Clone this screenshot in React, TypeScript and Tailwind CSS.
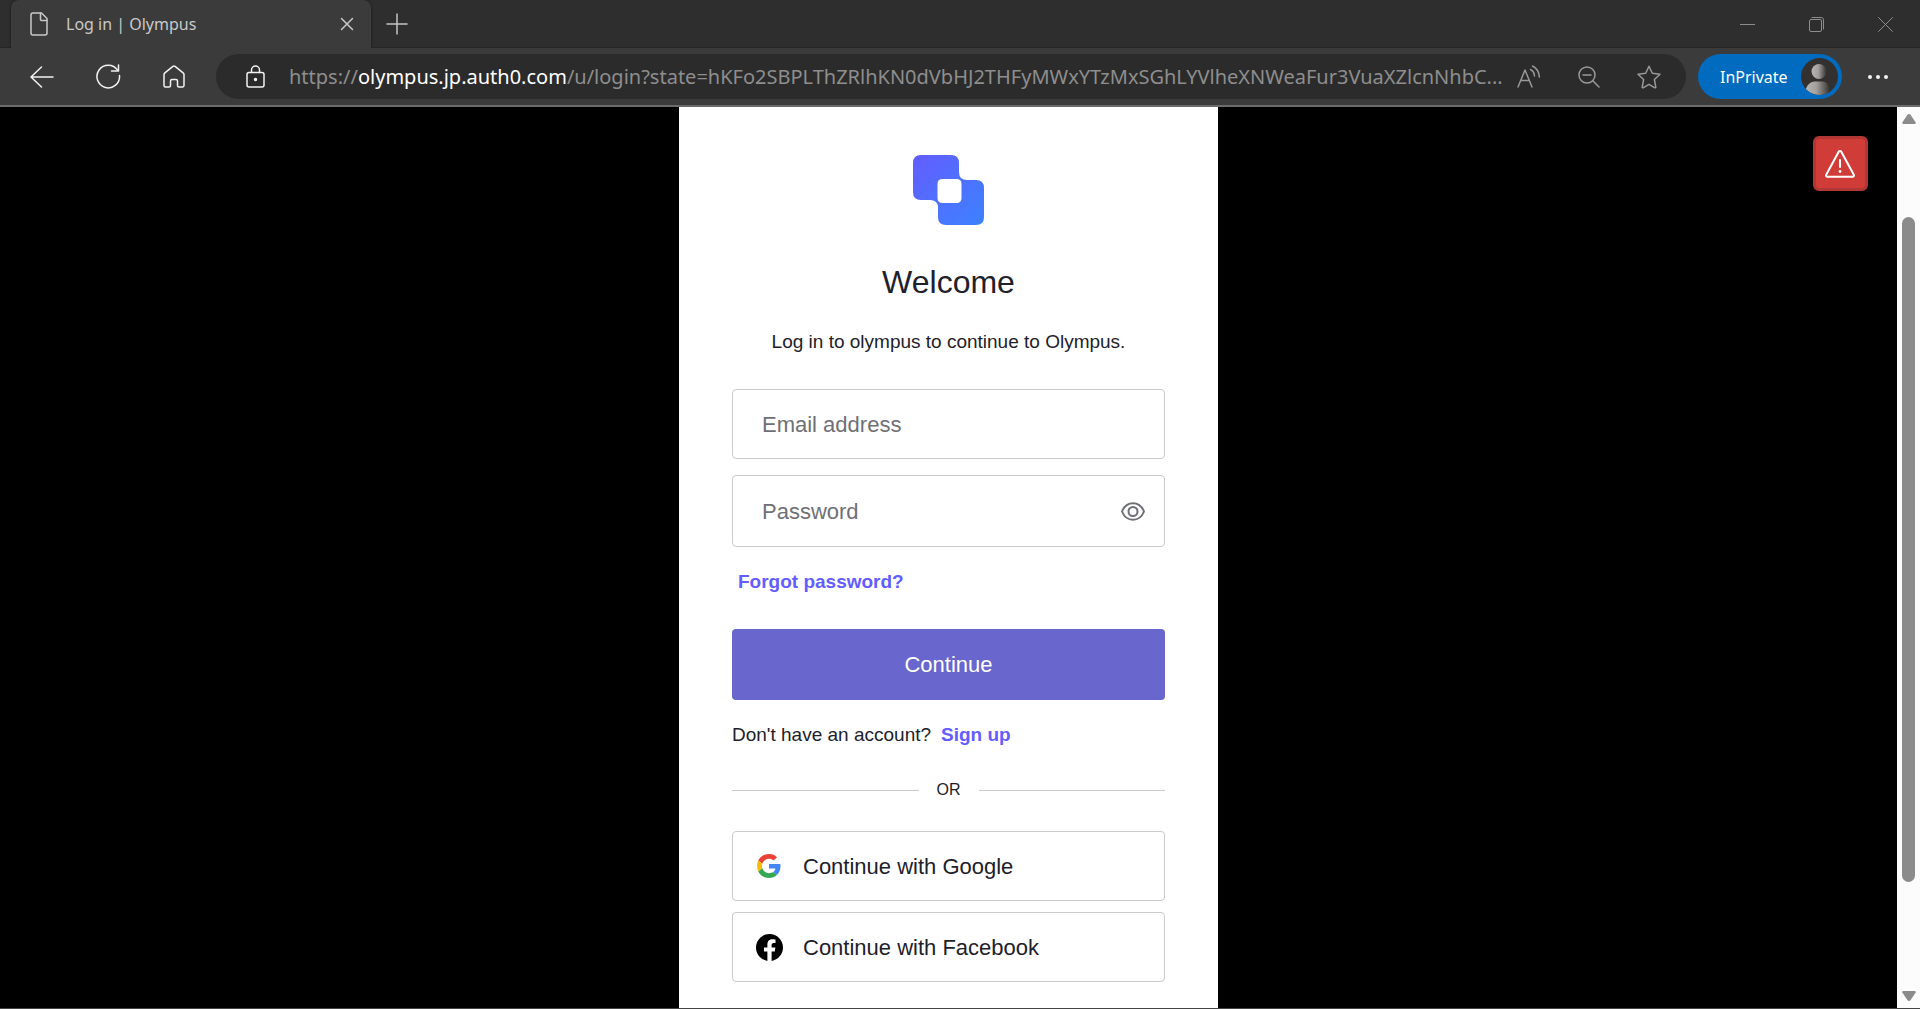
import React from "react";

const iconButton = "flex h-12 w-12 shrink-0 items-center justify-center";

function Icon({ w, h, stroke = 2, children }: { w: number; h: number; stroke?: number; children: React.ReactNode }) {
  return (
    <svg
      width={w}
      height={h}
      viewBox={`0 0 ${w} ${h}`}
      fill="none"
      stroke="currentColor"
      strokeWidth={stroke}
      strokeLinecap="round"
      strokeLinejoin="round"
      className="shrink-0"
      aria-hidden="true"
    >
      {children}
    </svg>
  );
}

function TabStrip() {
  return (
    <div className="flex h-12 shrink-0 items-stretch bg-[#2e2e2e] pl-[11px] shadow-[inset_0_-1px_0_#262626]">
      <div className="flex w-[360px] items-center rounded-t-lg bg-[#3b3b3b] pr-3 pl-[19px] text-[#c9c9c9] shadow-[0_0_3px_#1c1c1c]">
        <Icon w={18} h={24} stroke={1.5}>
          <path d="M3 1h8.500l5.500 5.500V21a2 2 0 0 1-2 2H3a2 2 0 0 1-2-2V3a2 2 0 0 1 2-2z" />
          <path d="M10.500 1v6.500a1 1 0 0 0 1 1H17" />
        </Icon>
        <span className="ml-[18px] flex-1 text-base">Log in | Olympus</span>
        <button type="button" aria-label="Close tab" className="flex h-6 w-6 items-center justify-center">
          <Icon w={14} h={14} stroke={1.5}>
            <path d="M1.500 1.500l11 11M12.500 1.500l-11 11" />
          </Icon>
        </button>
      </div>
      <button type="button" aria-label="New tab" className="flex w-[52px] items-center justify-center text-[#c4c4c4]">
        <Icon w={22} h={22} stroke={1.5}>
          <path d="M11 1v20M1 11h20" />
        </Icon>
      </button>
      <div className="ml-auto flex text-[#8d8d8d]">
        <button type="button" aria-label="Minimize" className="flex w-[69px] items-center justify-center">
          <Icon w={15} h={15} stroke={1}>
            <path d="M0 7.500h15" />
          </Icon>
        </button>
        <button type="button" aria-label="Restore" className="flex w-[69px] items-center justify-center">
          <Icon w={15} h={15} stroke={1}>
            <rect x="0.500" y="2.500" width="12" height="12" rx="1.500" />
            <path d="M3 .5h9a2.500 2.500 0 0 1 2.500 2.500v9" />
          </Icon>
        </button>
        <button type="button" aria-label="Close" className="flex w-[69px] items-center justify-center">
          <Icon w={15} h={15} stroke={1}>
            <path d="M.5.5l14 14M14.500.5l-14 14" />
          </Icon>
        </button>
      </div>
    </div>
  );
}

function Toolbar() {
  return (
    <div className="flex h-[59px] shrink-0 items-center border-b-2 border-[#6b6b6b] bg-[#3b3b3b] px-[18px] text-[#f2f2f2]">
      <div className="flex gap-[18px]">
        <button type="button" aria-label="Back" className={iconButton}>
          <Icon w={24} h={22} stroke={1.5}>
            <path d="M11.500 1L1 11l10.500 10M1.500 11H23" />
          </Icon>
        </button>
        <button type="button" aria-label="Refresh" className={iconButton}>
          <Icon w={25} h={25} stroke={1.5}>
            <path d="M23.500 11.500A11.300 11.300 0 1 1 21.600 6.200" />
            <path d="M22.500 1v6h-7" />
          </Icon>
        </button>
        <button type="button" aria-label="Home" className={iconButton}>
          <Icon w={22} h={23} stroke={1.500}>
            <path d="M1 9.800c0-.8.300-1.400.9-1.900l8-6.500a1.700 1.700 0 0 1 2.200 0l8 6.500c.6.500.9 1.100.9 1.900V20.500A1.500 1.500 0 0 1 19.500 22H16a1.500 1.500 0 0 1-1.500-1.500V16A1.500 1.500 0 0 0 13 14.500H9A1.500 1.500 0 0 0 7.500 16v4.500A1.500 1.500 0 0 1 6 22H2.500A1.500 1.500 0 0 1 1 20.500z" />
          </Icon>
        </button>
      </div>

      <div className="mr-3 ml-[18px] flex h-[45px] min-w-0 flex-1 items-center rounded-full bg-[#2b2b2b] pr-[13px] pl-[15px]">
        <button type="button" aria-label="Site information" className={iconButton}>
          <Icon w={19} h={23} stroke={1.500}>
            <rect x="1" y="7.500" width="17" height="14.500" rx="2" />
            <path d="M5.500 7.500V5a4 4 0 0 1 8 0v2.500" />
            <circle cx="9.500" cy="14.500" r="1" fill="currentColor" />
          </Icon>
        </button>
        <div
          role="textbox"
          aria-label="Address"
          contentEditable
          suppressContentEditableWarning
          spellCheck={false}
          className="ml-[10px] min-w-0 flex-1 overflow-hidden text-[20px] leading-8 whitespace-nowrap text-[#8e8e8e]"
        >
          https://<span className="text-white">olympus.jp.auth0.com</span>
          /u/login?state=hKFo2SBPLThZRlhKN0dVbHJ2THFyMWxYTzMxSGhLYVlheXNWeaFur3VuaXZlcnNhbC...
        </div>
        <div className="flex gap-3 text-[#999]">
          <button type="button" aria-label="Read aloud" className={iconButton}>
            <Icon w={24} h={24} stroke={1.500}>
              <path d="M1 22L8 5l7 17M3.800 15.500h8.600" />
              <path d="M13.500 4.500c2.300 1.200 3.800 3.500 4 6.500M15.500 1c4 2 6.500 6 6.900 11" />
            </Icon>
          </button>
          <button type="button" aria-label="Zoom" className={iconButton}>
            <Icon w={22} h={22} stroke={1.500}>
              <circle cx="9" cy="9" r="8" />
              <path d="M5 9h8M14.800 14.800L21 21" />
            </Icon>
          </button>
          <button type="button" aria-label="Add to favorites" className={iconButton}>
            <Icon w={24} h={24} stroke={1.500}>
              <path d="M12 1.200l3.300 7 7.700 1-5.600 5.300 1.400 7.600c.1.600-.4.900-.9.700L12 19.400l-5.900 3.400c-.5.200-1-.1-.9-.7l1.400-7.600L1 9.200l7.700-1z" />
            </Icon>
          </button>
        </div>
      </div>

      <button type="button" className="flex h-[45px] w-36 shrink-0 items-center justify-between rounded-full bg-[#006bbf] pr-1 pl-[22px] text-base text-white">
        InPrivate
        <svg width="37" height="37" viewBox="0 0 37 37" aria-hidden="true">
          <defs>
            <linearGradient id="person" x1="0" x2="1">
              <stop offset="0" stopColor="#b9b6b2" />
              <stop offset="0.450" stopColor="#a3a09d" />
              <stop offset="1" stopColor="#34322f" />
            </linearGradient>
            <clipPath id="round">
              <circle cx="18.500" cy="18.500" r="18.500" />
            </clipPath>
          </defs>
          <g clipPath="url(#round)">
            <rect width="37" height="37" fill="#33312f" />
            <circle cx="18" cy="13.500" r="7.500" fill="url(#person)" />
            <path d="M4 37c0-8 4-13.500 10-13.500h7c5 0 8 4 8 13.500z" fill="url(#person)" />
          </g>
        </svg>
      </button>
      <button type="button" aria-label="Settings and more" className={iconButton + " ml-3"}>
        <svg width="20" height="4" viewBox="0 0 20 4" fill="currentColor" aria-hidden="true">
          <circle cx="2" cy="2" r="2" />
          <circle cx="10" cy="2" r="2" />
          <circle cx="18" cy="2" r="2" />
        </svg>
      </button>
    </div>
  );
}

function Logo() {
  return (
    <svg width="71" height="70" viewBox="0 0 71 70" role="img" aria-label="Olympus" className="mx-auto">
      <defs>
        <linearGradient id="mark" x1="0" y1="0" x2="1" y2="1">
          <stop offset="0" stopColor="#635dff" />
          <stop offset="1" stopColor="#3c82ff" />
        </linearGradient>
      </defs>
      <path
        fill="url(#mark)"
        fillRule="evenodd"
        d="M8 0H38Q46 0 46 8V17Q46 25 54 25H63Q71 25 71 33V62Q71 70 63 70H33Q25 70 25 62V53Q25 45 17 45H8Q0 45 0 37V8Q0 0 8 0ZM29.500 24Q24.500 24 24.500 29V43Q24.500 48 29.500 48H43.500Q48.500 48 48.500 43V29Q48.500 24 43.500 24Z"
      />
    </svg>
  );
}

function GoogleMark() {
  return (
    <svg width="24" height="24" viewBox="0 0 48 48" aria-hidden="true">
      <path fill="#EA4335" d="M24 9.500c3.540 0 6.710 1.220 9.210 3.600l6.850-6.850C35.900 2.380 30.470 0 24 0 14.620 0 6.510 5.380 2.560 13.220l7.980 6.190C12.430 13.720 17.740 9.500 24 9.500z" />
      <path fill="#4285F4" d="M46.980 24.550c0-1.570-.15-3.090-.38-4.550H24v9.020h12.940c-.58 2.960-2.260 5.480-4.780 7.180l7.730 6c4.510-4.180 7.090-10.360 7.090-17.650z" />
      <path fill="#FBBC05" d="M10.530 28.590c-.48-1.450-.76-2.990-.76-4.590s.27-3.140.76-4.590l-7.980-6.190C.92 16.460 0 20.120 0 24c0 3.880.92 7.540 2.560 10.780l7.970-6.190z" />
      <path fill="#34A853" d="M24 48c6.480 0 11.930-2.130 15.890-5.810l-7.730-6c-2.150 1.450-4.920 2.300-8.160 2.300-6.260 0-11.570-4.220-13.470-9.910l-7.980 6.190C6.510 42.620 14.620 48 24 48z" />
    </svg>
  );
}

function FacebookMark() {
  return (
    <svg width="27" height="27" viewBox="0 0 24 24" aria-hidden="true">
      <path fill="#000" d="M24 12.073c0-6.627-5.373-12-12-12s-12 5.373-12 12c0 5.990 4.388 10.954 10.125 11.854v-8.385H7.078v-3.470h3.047V9.430c0-3.007 1.792-4.669 4.533-4.669 1.312 0 2.686.235 2.686.235v2.953H15.830c-1.491 0-1.956.925-1.956 1.874v2.250h3.328l-.532 3.470h-2.796v8.385C19.612 23.027 24 18.062 24 12.073z" />
    </svg>
  );
}

function SocialButton({ mark, label }: { mark: React.ReactNode; label: string }) {
  return (
    <button type="button" className="flex h-[70px] w-full items-center gap-5 rounded border border-[#c9cace] pl-[22px] text-[22px]">
      <span className="flex w-7 items-center justify-center">{mark}</span>
      {label}
    </button>
  );
}

const field = "peer block w-full rounded border border-[#c9cace] bg-white pl-[29px] text-[22px] outline-none focus:border-[#635dff]";
const fieldLabel =
  "pointer-events-none absolute inset-y-0 left-[30px] flex items-center text-[22px] text-[#6f7076] peer-[:not(:placeholder-shown)]:hidden";

function LoginCard() {
  return (
    <main className="w-full max-w-[539px] bg-white px-[53px] pt-12 pb-[26px] font-['Liberation_Sans',Arial,sans-serif] text-[#1e212a]">
      <Logo />
      <h1 className="mt-[37px] text-center text-[32px] leading-10">Welcome</h1>
      <p className="mt-[26px] text-center text-[19px] leading-7">Log in to olympus to continue to Olympus.</p>
      <form className="mt-[33px]" onSubmit={(e) => e.preventDefault()}>
        <div className="relative">
          <input id="email" type="email" placeholder=" " className={field + " h-[70px] pr-7"} />
          <label htmlFor="email" className={fieldLabel}>Email address</label>
        </div>
        <div className="relative mt-4">
          <input id="password" type="password" placeholder=" " className={field + " h-[72px] pr-16"} />
          <label htmlFor="password" className={fieldLabel}>Password</label>
          <button
            type="button"
            aria-label="Show password"
            className="absolute inset-y-0 right-2 flex w-12 items-center justify-center text-[#6f7076]"
          >
            <Icon w={24} h={19} stroke={2}>
              <path d="M1 9.500C3 4.500 7 1.200 12 1.200s9 3.300 11 8.300c-2 5-6 8.300-11 8.300S3 14.500 1 9.500z" />
              <circle cx="12" cy="9.500" r="4.500" />
            </Icon>
          </button>
        </div>
        <a href="#forgot" className="mt-[21px] block w-fit pl-[6px] text-[19px] leading-7 font-bold text-[#635dff]">
          Forgot password?
        </a>
        <button type="submit" className="mt-[33px] block h-[71px] w-full rounded bg-[#6966cd] text-[22px] text-white">
          Continue
        </button>
      </form>
      <p className="mt-[21px] flex gap-[10px] text-[19px] leading-7">
        Don't have an account?
        <a href="#signup" className="font-bold text-[#635dff]">Sign up</a>
      </p>
      <div className="mt-[29px] flex items-center gap-[18px] text-base leading-6">
        <span className="h-px flex-1 bg-[#c9cace]" />
        OR
        <span className="h-px flex-1 bg-[#c9cace]" />
      </div>
      <div className="mt-[29px] flex flex-col gap-[11px]">
        <SocialButton mark={<GoogleMark />} label="Continue with Google" />
        <SocialButton mark={<FacebookMark />} label="Continue with Facebook" />
      </div>
    </main>
  );
}

function ScrollBar() {
  return (
    <div className="flex w-[23px] shrink-0 flex-col items-center bg-[#fcfcfc] py-[6px] text-[#8b8b8b]" aria-hidden="true">
      <svg width="14" height="12" viewBox="0 0 14 12" fill="currentColor">
        <path d="M5.500 1.800Q7 .2 8.500 1.800L13.700 9.500Q14.200 11 12.500 11H1.500Q-.2 11 .3 9.500z" />
      </svg>
      <div className="flex w-[13px] flex-1 flex-col pt-[92px] pb-[108px]">
        <div className="flex-1 rounded-full bg-[#8b8b8b]" />
      </div>
      <svg width="14" height="12" viewBox="0 0 14 12" fill="currentColor">
        <path d="M5.500 10.200Q7 11.800 8.500 10.200L13.700 2.500Q14.200 1 12.500 1H1.500Q-.2 1 .3 2.500z" />
      </svg>
    </div>
  );
}

export default function App() {
  return (
    <div className="flex min-h-screen flex-col border-b border-[#444] bg-black font-['Noto_Sans','Segoe_UI',sans-serif]">
      <TabStrip />
      <Toolbar />
      <div className="flex flex-1">
        <div className="relative flex flex-1 justify-center">
          <LoginCard />
          <button
            type="button"
            aria-label="Warning"
            className="absolute top-[29px] right-[29px] flex h-[55px] w-[55px] items-center justify-center rounded-md border-3 border-[#b13734] bg-[#d03c38] text-white"
          >
            <Icon w={32} h={28} stroke={2}>
              <path d="M13.700 1.800a1.500 1.500 0 0 1 2.600 0L28.800 24.700a1.400 1.400 0 0 1-1.200 2.100H2.400a1.400 1.400 0 0 1-1.200-2.100z" />
              <path d="M15 10v7" />
              <circle cx="15" cy="21.500" r="0.700" fill="currentColor" strokeWidth="1.500" />
            </Icon>
          </button>
        </div>
        <ScrollBar />
      </div>
    </div>
  );
}
